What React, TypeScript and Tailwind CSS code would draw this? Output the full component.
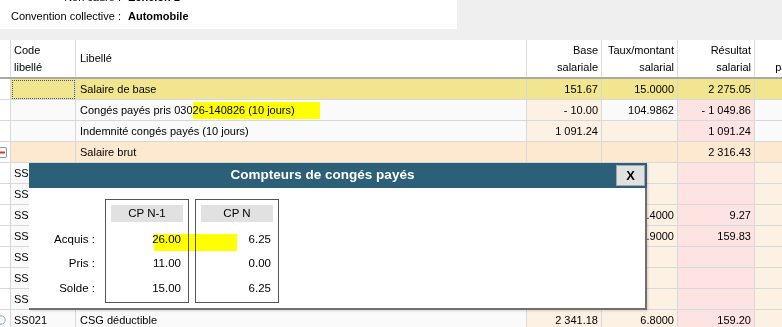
import React from 'react';

const COLS = 'grid grid-cols-[11px_65px_451px_75px_76px_77px_70px]';

const Y = 'bg-[#f2e590]';
const W = 'bg-[#fafafa]';
const WH = 'bg-white';
const P = 'bg-[#fdf1e4]';
const PK = 'bg-[#fde3e1]';
const PB = 'bg-[#fde9cf]';

type Cell = { t?: React.ReactNode; bg: string; cls?: string };

const MinusIcon = () => (
    <svg width="11" height="11" viewBox="0 0 11 11" className="-ml-[4px] shrink-0">
        <rect x="0.5" y="0.5" width="10" height="10" rx="1.5" fill="#fff" stroke="#7f9cbc" />
        <rect x="2" y="4.5" width="7" height="2" fill="#e0312f" />
    </svg>
);

const BubbleIcon = () => (
    <svg width="10" height="11" viewBox="0 0 10 11" className="-ml-[4px] shrink-0">
        <circle cx="5" cy="5" r="4.2" fill="#fff" stroke="#8aa6c4" />
        <path d="M3 8.6 L2.4 10.6 L5 9" fill="#fff" stroke="#8aa6c4" strokeWidth="0.8" />
    </svg>
);

const ssRows: { code: string; lib: string; base?: string; taux?: string; res?: string }[] = [
    { code: 'SS001', lib: 'Santé' },
    { code: 'SS002', lib: 'Retraite' },
    { code: 'SS010', lib: 'Sécurité Sociale - Vieillesse déplafonnée', base: '2 316.43', taux: '0.4000', res: '9.27' },
    { code: 'SS011', lib: 'Sécurité Sociale - Vieillesse plafonnée', base: '2 316.43', taux: '6.9000', res: '159.83' },
    { code: 'SS012', lib: 'Famille' },
    { code: 'SS015', lib: 'Assurance chômage' },
    { code: 'SS020', lib: 'Autres contributions dues par l\u2019employeur' },
];

const rows: Cell[][] = [
    [
        { bg: WH },
        { bg: Y, cls: 'outline outline-1 outline-dotted outline-[#555] -outline-offset-2' },
        { t: 'Salaire de base', bg: Y },
        { t: '151.67', bg: Y },
        { t: '15.0000', bg: Y },
        { t: '2 275.05', bg: Y },
        { bg: Y },
    ],
    [
        { bg: WH },
        { bg: W },
        {
            t: (
                <>
                    Congés payés pris 030
                    <span className="inline-block h-[17px] leading-[17px] pr-[25px] bg-[#ffff00]">26-140826 (10 jours)</span>
                </>
            ),
            bg: W,
        },
        { t: '- 10.00', bg: P },
        { t: '104.9862', bg: W },
        { t: '- 1 049.86', bg: PK },
        { bg: W },
    ],
    [
        { bg: WH },
        { bg: W },
        { t: 'Indemnité congés payés (10 jours)', bg: W },
        { t: '1 091.24', bg: P },
        { bg: P },
        { t: '1 091.24', bg: PK },
        { bg: W },
    ],
    [
        { t: <MinusIcon />, bg: WH },
        { bg: PB },
        { t: 'Salaire brut', bg: PB },
        { bg: PB },
        { bg: PB },
        { t: '2 316.43', bg: PB },
        { bg: PB },
    ],
    ...ssRows.map((r) => [
        { bg: WH },
        { t: r.code, bg: W },
        { t: r.lib, bg: W },
        { t: r.base, bg: P },
        { t: r.taux, bg: P },
        { t: r.res, bg: PK },
        { bg: P },
    ]),
    [
        { t: <BubbleIcon />, bg: WH },
        { t: 'SS021', bg: W },
        { t: 'CSG déductible', bg: W },
        { t: '2 341.18', bg: P },
        { t: '6.8000', bg: P },
        { t: '159.20', bg: PK },
        { bg: P },
    ],
];

const Row = ({ cells }: { cells: Cell[] }) => (
    <div className={`${COLS} h-[21px]`}>
        {cells.map((c, i) => (
            <div
                key={i}
                className={`flex items-center overflow-hidden whitespace-nowrap border-r border-b border-[#d6d9dc] ${
                    i >= 3 ? 'justify-end pr-[3px]' : i === 2 ? 'pl-[4px]' : i === 1 ? 'pl-[3px]' : ''
                } ${c.bg} ${c.cls ?? ''}`}
            >
                {c.t}
            </div>
        ))}
    </div>
);

const Box = ({ title, values }: { title: string; values: string[] }) => (
    <div className="w-[84px] h-[104px] border border-[#555] p-[5px]">
        <div className="h-[17px] leading-[17px] bg-[#e1e1e1] text-center">{title}</div>
        <div className="mt-[5px]">
            {values.map((v, i) => (
                <div key={i} className="h-[24.5px] flex items-center justify-end pr-[2px]">
                    {v}
                </div>
            ))}
        </div>
    </div>
);

const CongesDialog = () => (
    <div className="absolute left-[29px] top-[163px] w-[618px] h-[147px] flex flex-col shadow-[1px_1px_2px_rgba(0,0,0,0.15)]">
        <div className="h-[25px] bg-[#2c6079] flex items-center pr-[2px]">
            <div className="flex-1 text-center text-white font-bold text-[13.5px]">Compteurs de congés payés</div>
            <div className="w-[29px] h-[21px] bg-[#e1e1e1] border border-[#a6a6a6] flex items-center justify-center font-bold text-[13px]">
                X
            </div>
        </div>
        <div className="flex-1 relative bg-white border-r-2 border-b-2 border-[#707070] pt-[11px] flex text-[11.5px]">
            <div className="w-[66px] pt-[28px]">
                {['Acquis :', 'Pris :', 'Solde :'].map((l) => (
                    <div key={l} className="h-[24.5px] flex items-center justify-end">
                        {l}
                    </div>
                ))}
            </div>
            <div className="ml-[10px] flex gap-[6px]">
                <Box title="CP N-1" values={['26.00', '11.00', '15.00']} />
                <Box title="CP N" values={['6.25', '0.00', '6.25']} />
            </div>
            {/* surlignage annotation */}
            <div className="absolute left-[125px] top-[46px] w-[83px] h-[17px] bg-[#ffff00] mix-blend-multiply" />
        </div>
    </div>
);

const App: React.FC = () => {
    return (
        <div className="relative w-[782px] h-[327px] overflow-hidden bg-[#efefef] text-black text-[11px] font-['Liberation_Sans',Arial,sans-serif]">
            {/* entête salarié */}
            <div className="h-[29px] w-[457px] bg-white overflow-hidden">
                <div className="-mt-[12px] grid grid-cols-[121px_1fr] gap-x-[7px] leading-[19px]">
                    <div className="text-right">Non cadre :</div>
                    <div className="font-bold">Echelon 1</div>
                    <div className="text-right">Convention collective :</div>
                    <div className="font-bold">Automobile</div>
                </div>
            </div>
            <div className="h-[11px]" />

            <div className="w-[825px]">
                <div className={`${COLS} h-[39px] bg-white border-b-2 border-[#a9a9a9] leading-[17px]`}>
                    <div className="border-r border-[#dcdcdc]" />
                    <div className="border-r border-[#dcdcdc] pl-[3px] flex flex-col justify-center">
                        <span>Code</span>
                        <span>libellé</span>
                    </div>
                    <div className="border-r border-[#dcdcdc] pl-[4px] flex items-center">Libellé</div>
                    <div className="border-r border-[#dcdcdc] pr-[3px] flex flex-col justify-center items-end">
                        <span>Base</span>
                        <span>salariale</span>
                    </div>
                    <div className="border-r border-[#dcdcdc] pr-[3px] flex flex-col justify-center items-end">
                        <span>Taux/montant</span>
                        <span>salarial</span>
                    </div>
                    <div className="border-r border-[#dcdcdc] pr-[3px] flex flex-col justify-center items-end">
                        <span>Résultat</span>
                        <span>salarial</span>
                    </div>
                    <div className="border-r border-[#dcdcdc] pr-[3px] flex flex-col justify-center items-end">
                        <span>Base</span>
                        <span>patronale</span>
                    </div>
                </div>
                {rows.map((r, i) => (
                    <Row key={i} cells={r} />
                ))}
            </div>

            <CongesDialog />
        </div>
    );
};

export default App;
